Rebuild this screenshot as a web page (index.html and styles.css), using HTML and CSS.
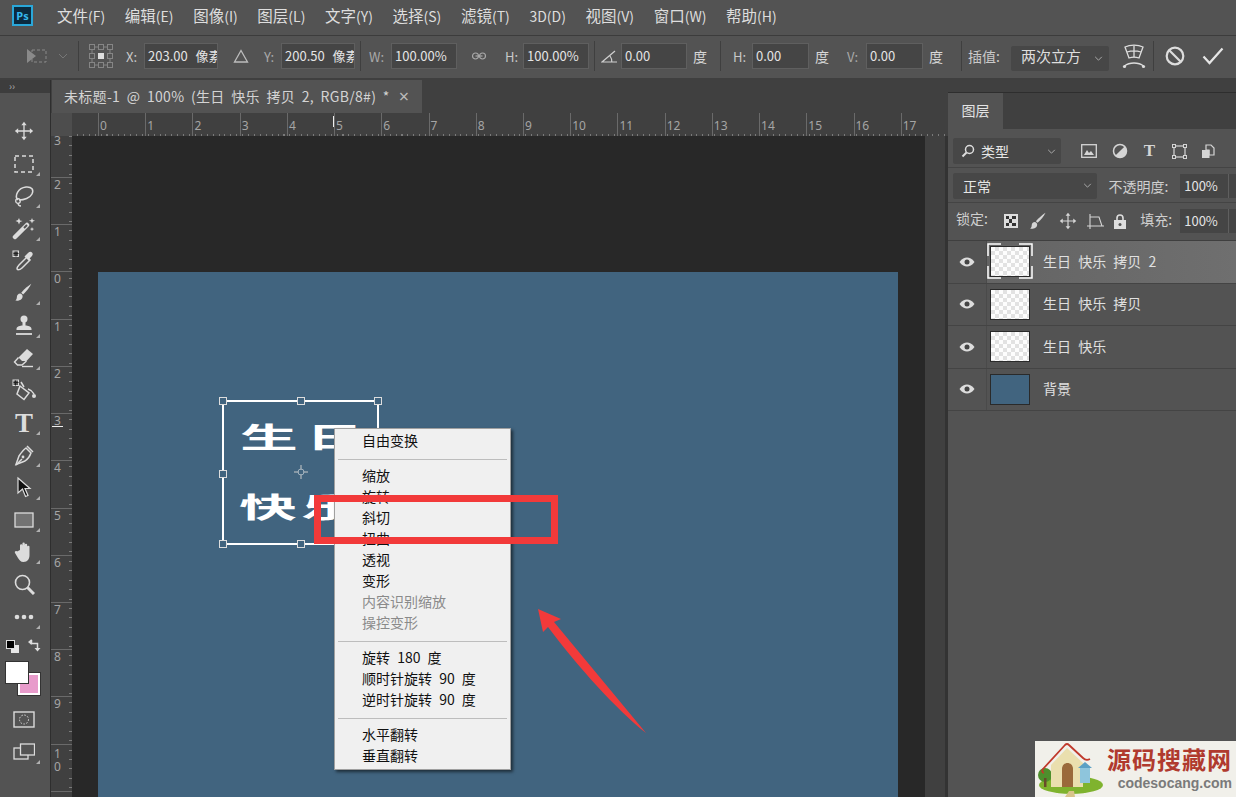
FILE: index.html
```html
<!DOCTYPE html>
<html lang="zh">
<head>
<meta charset="utf-8">
<title>Photoshop</title>
<link rel="stylesheet" href="styles.css">
</head>
<body>
<svg class="defs" width="0" height="0">
  <symbol id="i-move" viewBox="0 0 24 24"><path d="M12 3v18M3 12h18" fill="none" stroke="currentColor" stroke-width="1.6"/><path d="M12 1l3.2 4H8.800zM12 23l3.200-4H8.800zM1 12l4-3.200v6.400zM23 12l-4-3.200v6.400z" fill="currentColor"/></symbol>
  <symbol id="i-brush" viewBox="0 0 24 24"><path d="M20 2c-1.500 3.500-5.500 8.500-9 11.500l-2-1.800C12 8 17 4 20 2z" fill="currentColor"/><path d="M8 12.500c-2.500 0-3.800 2-3.800 4 0 1.500-.7 2.800-1.700 3.700 3.500.6 8-.6 8-4.700 0-1-.8-2.700-2.500-3z" fill="currentColor"/></symbol>
</svg>

<div class="app">
  <header class="menubar">
    <div class="ps-logo">Ps</div>
    <nav class="menus">
      <span>文件<small>(F)</small></span><span>编辑<small>(E)</small></span><span>图像<small>(I)</small></span><span>图层<small>(L)</small></span><span>文字<small>(Y)</small></span><span>选择<small>(S)</small></span><span>滤镜<small>(T)</small></span><span><small>3D(D)</small></span><span>视图<small>(V)</small></span><span>窗口<small>(W)</small></span><span>帮助<small>(H)</small></span>
    </nav>
  </header>

  <div class="optbar">
    <svg class="o-icon" width="22" height="18" viewBox="0 0 22 18"><path d="M1 2l9 7-9 7z" fill="#8a8a8a"/><rect x="6" y="3" width="14" height="12" fill="none" stroke="#8a8a8a" stroke-dasharray="3 2"/></svg>
    <svg class="chev dim" width="10" height="6" viewBox="0 0 10 6"><path d="M1 1l4 4 4-4" fill="none" stroke="currentColor"/></svg>
    <i class="sep"></i>
    <svg class="o-left" width="24" height="24" viewBox="0 0 24 24"><g fill="none" stroke="#858585"><rect x=".5" y=".5" width="5" height="5"/><rect x="9.500" y=".5" width="5" height="5"/><rect x="18.500" y=".5" width="5" height="5"/><rect x=".5" y="9.500" width="5" height="5"/><rect x="18.500" y="9.500" width="5" height="5"/><rect x=".5" y="18.500" width="5" height="5"/><rect x="9.500" y="18.500" width="5" height="5"/><rect x="18.500" y="18.500" width="5" height="5"/><path d="M6 3h3M15 3h3M6 21h3M15 21h3M3 6v3M3 15v3M21 6v3M21 15v3"/></g><rect x="9" y="9" width="6" height="6" fill="#ddd"/></svg>
    <span class="lab">X:</span><span class="inp">203.00 像素</span>
    <svg class="o-tri" width="16" height="14" viewBox="0 0 16 14"><path d="M8 1.500L14.500 13h-13z" fill="none" stroke="#bdbdbd" stroke-width="1.300"/></svg>
    <span class="lab dim">Y:</span><span class="inp">200.50 像素</span>
    <i class="sep"></i>
    <span class="lab dim">W:</span><span class="inp">100.00%</span>
    <svg class="o-link" width="16" height="8" viewBox="0 0 16 8"><g fill="none" stroke="#a8a8a8" stroke-width="1.200"><circle cx="4.500" cy="4" r="3"/><circle cx="11.500" cy="4" r="3"/><path d="M4.500 4h7"/></g></svg>
    <span class="lab">H:</span><span class="inp">100.00%</span>
    <i class="sep"></i>
    <svg class="o-left" width="17" height="13" viewBox="0 0 17 13"><path d="M16 12H1L14 1M9 6c1.200 1.500 1.800 3.500 1.800 6" fill="none" stroke="#cfcfcf" stroke-width="1.200"/></svg>
    <span class="inp">0.00</span><span class="unit">度</span>
    <i class="sep"></i>
    <span class="lab">H:</span><span class="inp">0.00</span><span class="unit">度</span>
    <span class="lab dim">V:</span><span class="inp">0.00</span><span class="unit">度</span>
    <i class="sep"></i>
    <span class="lab wide">插值:</span>
    <span class="sel"><b>两次立方</b><svg class="chev" width="9" height="5" viewBox="0 0 10 6"><path d="M1 1l4 4 4-4" fill="none" stroke="currentColor"/></svg></span>
    <svg class="o-warp" width="24" height="26" viewBox="0 0 24 26"><g fill="none" stroke="#ddd" stroke-width="1.300"><path d="M3 4c5-2.500 13-2.500 18 0l-4 11c-3-1-7-1-10 0z"/><path d="M12 2.500v12M5 9c4-1.200 10-1.200 14 0"/><path d="M2.500 23c5-4 14-4 19 0"/></g><circle cx="2.500" cy="23.500" r="1.600" fill="#ddd"/><circle cx="21.500" cy="23.500" r="1.600" fill="#ddd"/></svg>
    <i class="sep"></i>
    <svg class="o-left" width="20" height="20" viewBox="0 0 20 20"><circle cx="10" cy="10" r="8.300" fill="none" stroke="#ddd" stroke-width="2.200"/><path d="M4.500 4.500l11 11" stroke="#ddd" stroke-width="2.200"/></svg>
    <svg class="o-left" width="22" height="18" viewBox="0 0 22 18"><path d="M1.500 9.500l6 6.500L20.500 1.500" fill="none" stroke="#e6e6e6" stroke-width="2.200"/></svg>
  </div>

  <div class="main">
    <aside class="toolbar">
      <div class="tb-head">››</div>
      <div class="tb-grip"></div>
      <div class="tool"><svg class="ic" width="20" height="20"><use href="#i-move"/></svg></div>
      <div class="tool more"><svg class="ic" width="20" height="18" viewBox="0 0 20 18"><rect x="1" y="1" width="18" height="16" fill="none" stroke="currentColor" stroke-width="1.500" stroke-dasharray="4 3"/></svg></div>
      <div class="tool more"><svg class="ic" width="22" height="22" viewBox="0 0 22 22"><path d="M5 15C1 11 5 3 13 2c6-.5 8 3 6 7-2 4-8 6-13 6" fill="none" stroke="currentColor" stroke-width="1.500"/><circle cx="5" cy="16" r="2.300" fill="none" stroke="currentColor" stroke-width="1.300"/><path d="M5 18c0 2 1 3 3 3" fill="none" stroke="currentColor" stroke-width="1.300"/></svg></div>
      <div class="tool more"><svg class="ic" width="24" height="24" viewBox="0 0 24 24"><path d="M3 21L15 9" stroke="currentColor" stroke-width="4.500" stroke-linecap="round"/><path d="M12 12l3-3" stroke="#535353" stroke-width="2"/><path d="M7 2l1 2.500L10.500 5 8 6l-1 2.500L6 6 3.500 5 6 4zM20 2l.8 2 2.200.8-2.200.8-.8 2-.8-2-2.200-.8 2.200-.8zM20 11l.6 1.500 1.500.6-1.500.6-.6 1.500-.6-1.500-1.500-.6 1.500-.6z" fill="currentColor"/></svg></div>
      <div class="tool"><svg class="ic" width="24" height="24" viewBox="0 0 24 24"><path d="M7 16l8-8 3 3-8 8c-1.500 1.500-3 1.800-4 1.800l-1-.8c0-1 .5-2.500 2-4z" fill="none" stroke="currentColor" stroke-width="1.500"/><path d="M14 6l2-2c1.500-1.500 3-1.500 4-.5s1 2.500-.5 4l-2 2 1 1-1.500 1.500-4.500-4.500 1.500-1.500z" fill="currentColor"/><rect x="1" y="2" width="5.500" height="5.500" fill="#555" stroke="#ddd"/><path d="M1.500 4.500l5 0M4 2.500v5" stroke="#222"/></svg></div>
      <div class="tool more"><svg class="ic" width="22" height="22"><use href="#i-brush"/></svg></div>
      <div class="tool more"><svg class="ic" width="20" height="21" viewBox="0 0 20 21"><circle cx="10" cy="4" r="3.500" fill="currentColor"/><path d="M8.500 7h3v3.500c2 .3 6 .8 6 3.500v1H2.500v-1c0-2.700 4-3.200 6-3.500z" fill="currentColor"/><path d="M2 19h16" stroke="currentColor" stroke-width="1.800"/></svg></div>
      <div class="tool more"><svg class="ic" width="22" height="20" viewBox="0 0 22 20"><path d="M14 1l6 5-6.500 7H9L5.500 9.500z" fill="currentColor"/><path d="M5.500 9.500L1.500 14l3 3h4.500l4.500-4" fill="none" stroke="currentColor" stroke-width="1.400"/><path d="M9 18.500h11" stroke="currentColor" stroke-width="1.400"/></svg></div>
      <div class="tool"><svg class="ic" width="24" height="23" viewBox="0 0 24 23"><path d="M8 7l9 7-5 6.500-7-5.500z" fill="none" stroke="currentColor" stroke-width="1.500"/><path d="M9 3l3 5" stroke="currentColor" stroke-width="1.500"/><circle cx="22" cy="17" r="2" fill="currentColor"/><path d="M16 10c3 1 5 3 6 5" fill="none" stroke="currentColor" stroke-width="1.500"/><rect x="1" y="1" width="5.500" height="5.500" fill="#555" stroke="#ddd"/><path d="M1.500 3.500l5 0M3.500 1.500v5" stroke="#222"/></svg></div>
      <div class="tool more"><span class="t-glyph">T</span></div>
      <div class="tool more"><svg class="ic" width="20" height="21" viewBox="0 0 20 21"><path d="M12 3l5 5c-1 3-3 6-6 8-3 1-6 2.500-9 3.500C3 16.500 4 14 5 11c2-3 4-6 7-8z" fill="none" stroke="currentColor" stroke-width="1.500"/><path d="M13 1l6 6M2 20l6-6" stroke="currentColor" stroke-width="1.500"/><circle cx="9" cy="12" r="1.400" fill="currentColor"/></svg></div>
      <div class="tool more"><svg class="ic" width="16" height="22" viewBox="0 0 16 22"><path d="M2 2l12 10.500H9l3 7-2.500 1-3-7.500L2 17z" fill="#111" stroke="#ddd" stroke-width="1.200"/></svg></div>
      <div class="tool more"><svg class="ic" width="20" height="16" viewBox="0 0 20 16"><rect x="1" y="1" width="18" height="14" fill="#737373" stroke="currentColor" stroke-width="1.300"/></svg></div>
      <div class="tool more"><svg class="ic" width="20" height="21" viewBox="0 0 20 21"><path d="M6 8V3.500a1.200 1.200 0 012.400 0V1.800a1.200 1.200 0 012.400 0V3a1.200 1.200 0 012.400 0v1.500a1.200 1.200 0 012.300 0V13c0 4-2 7-6 7-3 0-4-2-5.500-4L1 11c-.8-1.500 1-2.500 2-1.500z" fill="currentColor"/></svg></div>
      <div class="tool"><svg class="ic" width="21" height="21" viewBox="0 0 21 21"><circle cx="8.500" cy="8.500" r="7" fill="none" stroke="currentColor" stroke-width="1.600"/><path d="M13.500 13.500L20 20" stroke="currentColor" stroke-width="3"/></svg></div>
      <div class="tool more"><svg class="ic" width="20" height="6" viewBox="0 0 20 6"><circle cx="3" cy="3" r="2.300" fill="currentColor"/><circle cx="10" cy="3" r="2.300" fill="currentColor"/><circle cx="17" cy="3" r="2.300" fill="currentColor"/></svg></div>
      <div class="swatches">
        <i class="mini-b"></i><i class="mini-f"></i>
        <svg class="swap" width="13" height="13" viewBox="0 0 13 13"><path d="M3.500 1v3.500h6V11" fill="none" stroke="#ddd" stroke-width="1.500"/><path d="M0 3l3.500-3v6zM6.500 9h6l-3 3.500z" fill="#ddd"/></svg>
        <i class="bg"></i><i class="fg"></i>
      </div>
      <div class="tool"><svg class="ic" width="22" height="17" viewBox="0 0 22 17"><rect x="1" y="1" width="20" height="15" fill="none" stroke="currentColor" stroke-width="1.400"/><circle cx="11" cy="8.500" r="4.500" fill="none" stroke="currentColor" stroke-dasharray="1.500 1.500"/></svg></div>
      <div class="tool more"><svg class="ic" width="22" height="17" viewBox="0 0 22 17"><rect x="1" y="5" width="14" height="11" fill="none" stroke="currentColor" stroke-width="1.300"/><rect x="7.500" y="1" width="14" height="11" fill="#535353" stroke="currentColor" stroke-width="1.300"/></svg></div>
    </aside>

    <section class="doc">
      <div class="tabbar">
        <div class="tab"><span>未标题-1 @ 100% (生日 快乐 拷贝 2, RGB/8#) *</span><em>×</em></div>
      </div>
      <div class="hruler">
        <div class="corner"></div>
        <div class="hoff"></div>
        <span>0</span><span>1</span><span>2</span><span>3</span><span>4</span><span>5</span><span>6</span><span>7</span><span>8</span><span>9</span><span>10</span><span>11</span><span>12</span><span>13</span><span>14</span><span>15</span><span>16</span><span>17</span>
        <i class="hmark"></i>
      </div>
      <div class="docbody">
        <div class="vruler">
          <span class="first">3</span><span>2</span><span>1</span><span>0</span><span>1</span><span>2</span><span>3</span><span>4</span><span>5</span><span>6</span><span>7</span><span>8</span><span>9</span><span class="ten">10</span><span class="end"></span>
          <i class="vmark"></i>
        </div>
        <div class="canvas">
          <div class="page"></div>
        </div>
        <div class="gutter"></div>
      </div>

      <div class="tbox">
        <b class="art a1">生</b><b class="art a2">日</b><b class="art a3">快</b><b class="art a4">乐</b>
        <i class="h tl"></i><i class="h tm"></i><i class="h tr"></i><i class="h ml"></i><i class="h bl"></i><i class="h bm"></i>
        <svg class="pivot" width="14" height="14" viewBox="0 0 14 14"><path d="M7 0v5M7 9v5M0 7h5M9 7h5" stroke="#c9c9c9"/><circle cx="7" cy="7" r="3" fill="none" stroke="#9fb0bd"/></svg>
      </div>

      <div class="ctx">
        <div class="it">自由变换</div><hr>
        <div class="it">缩放</div><div class="it">旋转</div><div class="it">斜切</div><div class="it">扭曲</div><div class="it">透视</div><div class="it">变形</div>
        <div class="it off">内容识别缩放</div><div class="it off">操控变形</div><hr>
        <div class="it">旋转 180 度</div><div class="it">顺时针旋转 90 度</div><div class="it">逆时针旋转 90 度</div><hr>
        <div class="it">水平翻转</div><div class="it">垂直翻转</div>
      </div>

      <div class="redbox"></div>
      <svg class="arrow" width="120" height="136" viewBox="0 0 120 136"><path d="M1 1l23 10-7 3 92 111C80 102 40 58 11 19L6 24z" fill="#f23a3a"/></svg>
    </section>

    <aside class="panel">
      <div class="p-top"></div>
      <div class="p-tabs"><div class="p-tab">图层</div></div>
      <div class="p-row filter">
        <span class="psel w108"><svg width="14" height="14" viewBox="0 0 14 14"><circle cx="8.500" cy="5.500" r="4" fill="none" stroke="#ddd" stroke-width="1.500"/><path d="M5.500 8.500L1.500 12.500" stroke="#ddd" stroke-width="2"/></svg><b>类型</b><svg class="chev" width="9" height="5" viewBox="0 0 10 6"><path d="M1 1l4 4 4-4" fill="none" stroke="currentColor"/></svg></span>
        <div class="ficons">
          <svg width="16" height="14" viewBox="0 0 16 14"><rect x=".7" y=".7" width="14.600" height="12.600" fill="none" stroke="#d5d5d5" stroke-width="1.300"/><path d="M3 11l3-5 2 3 2-2 3 4z" fill="#d5d5d5"/></svg>
          <svg width="16" height="16" viewBox="0 0 16 16"><circle cx="8" cy="8" r="6.500" fill="none" stroke="#d5d5d5" stroke-width="1.500"/><path d="M12.600 3.400A6.500 6.500 0 013.400 12.600z" fill="#d5d5d5"/></svg>
          <span class="ft">T</span>
          <svg width="15" height="15" viewBox="0 0 15 15"><rect x="2" y="2" width="11" height="11" fill="none" stroke="#d5d5d5" stroke-width="1.200"/><g fill="#535353" stroke="#d5d5d5"><rect x=".5" y=".5" width="3" height="3"/><rect x="11.500" y=".5" width="3" height="3"/><rect x=".5" y="11.500" width="3" height="3"/><rect x="11.500" y="11.500" width="3" height="3"/></g></svg>
          <svg width="14" height="15" viewBox="0 0 14 15"><path d="M5 1h5l3 3v7H8V6H5z" fill="none" stroke="#d5d5d5" stroke-width="1.200"/><rect x="1" y="6" width="7.500" height="8" fill="#d5d5d5"/></svg>
        </div>
      </div>
      <div class="p-row blend">
        <span class="psel w145"><b>正常</b><svg class="chev" width="9" height="5" viewBox="0 0 10 6"><path d="M1 1l4 4 4-4" fill="none" stroke="currentColor"/></svg></span>
        <span class="plab op">不透明度:</span>
        <span class="pinp">100%</span><i class="pstub"></i>
      </div>
      <div class="p-row lock">
        <span class="plab lk">锁定:</span>
        <div class="licons">
          <svg width="14" height="14" viewBox="0 0 14 14"><rect width="14" height="14" fill="#ddd"/><path d="M2 2h3v3H2zM8 2h4v3H8zM5 5h3v4H5zM2 9h3v3H2zM8 9h4v3H8z" fill="#333"/></svg>
          <svg width="21" height="21"><use href="#i-brush"/></svg>
          <svg width="18" height="18"><use href="#i-move"/></svg>
          <svg width="17" height="15" viewBox="0 0 17 15"><path d="M3 3h9l3 9H3zM3 0v15M0 12h17" fill="none" stroke="#d5d5d5" stroke-width="1.100"/></svg>
          <svg width="12" height="15" viewBox="0 0 12 15"><path d="M3 6V4a3 3 0 016 0v2" fill="none" stroke="#ddd" stroke-width="1.600"/><rect y="6" width="12" height="9" fill="#ddd"/><circle cx="6" cy="10.500" r="1.500" fill="#535353"/></svg>
        </div>
        <span class="plab fil">填充:</span>
        <span class="pinp">100%</span><i class="pstub"></i>
      </div>
      <div class="layers">
        <div class="layer">
          <svg class="eye" width="16" height="10" viewBox="0 0 16 10"><path d="M.5 5C3 1.500 5.500.5 8 .5s5 1 7.500 4.500C13 8.500 10.500 9.500 8 9.500S3 8.500.5 5z" fill="#ddd"/><circle cx="8" cy="5" r="2.500" fill="#444"/></svg>
          <div class="lname active"><div class="thumb chk sel-th"><svg class="brk" width="46" height="36" viewBox="0 0 46 36"><path d="M1 13V1h13M32 1h13v12M45 23v12H32M14 35H1V23" fill="none" stroke="#fff" stroke-width="1.500"/></svg></div><span>生日 快乐 拷贝 2</span></div>
        </div>
        <div class="layer">
          <svg class="eye" width="16" height="10" viewBox="0 0 16 10"><path d="M.5 5C3 1.500 5.500.5 8 .5s5 1 7.500 4.500C13 8.500 10.500 9.500 8 9.500S3 8.500.5 5z" fill="#ddd"/><circle cx="8" cy="5" r="2.500" fill="#444"/></svg>
          <div class="lname"><div class="thumb chk"></div><span>生日 快乐 拷贝</span></div>
        </div>
        <div class="layer">
          <svg class="eye" width="16" height="10" viewBox="0 0 16 10"><path d="M.5 5C3 1.500 5.500.5 8 .5s5 1 7.500 4.500C13 8.500 10.500 9.500 8 9.500S3 8.500.5 5z" fill="#ddd"/><circle cx="8" cy="5" r="2.500" fill="#444"/></svg>
          <div class="lname"><div class="thumb chk"></div><span>生日 快乐</span></div>
        </div>
        <div class="layer">
          <svg class="eye" width="16" height="10" viewBox="0 0 16 10"><path d="M.5 5C3 1.500 5.500.5 8 .5s5 1 7.500 4.500C13 8.500 10.500 9.500 8 9.500S3 8.500.5 5z" fill="#ddd"/><circle cx="8" cy="5" r="2.500" fill="#444"/></svg>
          <div class="lname"><div class="thumb blue"></div><span>背景</span></div>
        </div>
      </div>
    </aside>
  </div>

  <div class="wm">
    <svg class="wm-house" width="72" height="56" viewBox="0 0 72 56">
      <ellipse cx="36" cy="44" rx="32" ry="9" fill="#7fb32e"/>
      <path d="M34 50l-4 6h10l-1-6z" fill="#d8c48a"/>
      <circle cx="10" cy="34" r="7" fill="#4e8f2c"/><rect x="9" y="37" width="2.500" height="9" fill="#6a4a2a"/>
      <circle cx="19" cy="38" r="3.500" fill="#4e8f2c"/>
      <path d="M16 24L32 7l16 15v24H16z" fill="#eadfae"/>
      <path d="M9 32q-3-1-1-4L30 4q2-2 4 0l14 13q3 3 7 1" fill="none" stroke="#c0392b" stroke-width="1.800"/>
      <path d="M27 46V28c0-8 11-8 11 0v18z" fill="#9a6a3a"/>
      <rect x="45" y="26" width="10" height="16" fill="#8ec5dc"/>
      <path d="M43 27l7-6 7 6z" fill="#5aa0c4"/>
    </svg>
    <div class="wm-text">
      <strong>源码搜藏网</strong>
      <span>codesocang.com</span>
    </div>
  </div>
</div>
</body>
</html>
```

FILE: styles.css
```css
* { box-sizing: border-box; }
html, body { margin: 0; height: 100%; overflow: hidden; background: #535353; }
body { font-family: "Noto Sans CJK SC", "Noto Sans", sans-serif; font-size: 14px; color: #dcdcdc; }
.defs { position: absolute; }
i, em { font-style: normal; display: block; }
b { font-weight: 400; }

.app { position: relative; width: 1236px; height: 797px; display: flex; flex-direction: column; overflow: hidden; }

/* menu */
.menubar { height: 36px; flex: none; display: flex; align-items: center; padding: 0 0 4px 12px; background: #535353; border-bottom: 1px solid #3c3c3c; }
.ps-logo { width: 21px; height: 21px; margin-right: 24px; background: #0b2a3f; border: 2px solid #2aa7d9; color: #35b8ee; font: 700 11px/17px "Noto Sans", sans-serif; text-align: center; }
.menus { display: flex; gap: 19.600px; font-size: 15.500px; color: #dedede; line-height: 20px; }
.menus small { font-size: 14px; }

/* options */
.optbar { height: 44px; flex: none; display: grid; align-items: center; padding: 0 0 2px 26px; background: #535353; border-bottom: 2px solid #3f3f3f;
  grid-template-columns: 22px 25px 16px 37px 18px 74px 46px 17px 74px 14px 22px 66px 48px 18px 66px 12px 20px 66px 28px 18px 19px 57px 38px 19px 57px 33px 12px 43px 98px 39px 17px 37px 34px; }
.optbar svg { display: block; }
.o-warp { margin-left: 13px; }
.o-tri { justify-self: center; }
.o-link { justify-self: center; margin-right: 4px; }
.chev { color: #bdbdbd; }
.dim { color: #777; }
.optbar .chev.dim { justify-self: center; margin-left: 4px; }
.sep { width: 1px; height: 30px; background: #3f3f3f; margin-left: 5px; }
.lab { font-size: 13px; color: #c9c9c9; white-space: nowrap; }
.lab.dim { color: #a9a9a9; }
.lab.wide { font-size: 14px; }
.inp { height: 26px; line-height: 24px; padding-left: 3px; background: #454545; border: 1px solid #5f5f5f; font-size: 13px; word-spacing: 5px; color: #e4e4e4; overflow: hidden; white-space: nowrap; }
.unit { font-size: 14px; padding-left: 6px; color: #d8d8d8; }
.sel { height: 25px; margin-top: 4px; display: flex; align-items: center; justify-content: space-between; padding: 0 6px 0 10px; background: #474747; border-radius: 2px; font-size: 15px; line-height: 19px; color: #dedede; }
.sel b { margin-bottom: 5px; }

/* main */
.main { flex: 1; min-height: 0; display: flex; }

.toolbar { width: 51px; flex: none; display: flex; flex-direction: column; background: #535353; border-right: 1px solid #2e2e2e; color: #dcdcdc; }
.tb-head { height: 13px; background: #3d3d3d; color: #aaa; font-size: 10px; line-height: 12px; padding-left: 9px; }
.tb-grip { height: 22px; flex: none; }
.tool { position: relative; height: 32.4px; flex: none; display: flex; align-items: center; justify-content: center; padding-right: 2px; }
.tool.more::after { content: ""; position: absolute; right: 10px; bottom: 4px; border-left: 4px solid transparent; border-bottom: 4px solid #b0b0b0; }
.ic { display: block; }
.t-glyph { font: 700 27px/30px "Liberation Serif", serif; color: #dcdcdc; }

.swatches { position: relative; height: 70px; flex: none; }
.swatches i { position: absolute; }
.mini-b { left: 11px; top: 12px; width: 8px; height: 8px; background: #e6e6e6; }
.mini-f { left: 6px; top: 7px; width: 9px; height: 9px; background: #000; border: 1px solid #ddd; }
.swap { position: absolute; left: 28px; top: 6px; }
.bg { left: 18px; top: 40px; width: 22px; height: 22px; background: #e89bcb; border: 2px solid #fff; outline: 1px solid #333; }
.fg { left: 5px; top: 28px; width: 24px; height: 23px; background: #fff; border: 1px solid #333; }

/* document */
.doc { position: relative; flex: 1; min-width: 0; display: flex; flex-direction: column; }
.tabbar { height: 33px; flex: none; background: #404040; padding-left: 1px; }
.tab { width: 370px; height: 33px; background: #535353; display: flex; align-items: center; padding: 0 0 2px 12px; color: #d4d4d4; font-size: 14px; white-space: nowrap; letter-spacing: .3px; word-spacing: 3.200px; }
.tab em { margin-left: 9px; color: #bbb; font-size: 18px; font-family: "Noto Sans", sans-serif; }
.hruler { position: relative; height: 23px; flex: none; display: flex; background: #404040 repeating-linear-gradient(90deg, #7a7a7a 0 1px, transparent 1px 5.9px) 26px bottom / 100% 2px no-repeat; color: #a5a5a5; font-size: 12px; overflow: hidden; }
.hruler .corner { width: 21px; flex: none; background: #4d4d4d; }
.hoff { width: 26px; flex: none; }
.hruler span { width: 47.22px; flex: none; padding: 4px 0 0 1px; line-height: 18px; border-left: 1px solid #6a6a6a; font-family: "Noto Sans", sans-serif; }
.hmark { position: absolute; left: 282px; top: 3px; width: 1px; height: 11px; background: #eee; }
.docbody { flex: 1; min-height: 0; display: flex; }
.vruler { position: relative; width: 21px; flex: none; display: flex; flex-direction: column; background: #404040 repeating-linear-gradient(180deg, #7a7a7a 0 1px, transparent 1px 9.44px) right top / 3px 100% no-repeat; color: #a5a5a5; font: 12px/10px "Noto Sans", sans-serif; }
.vruler span { height: 47.22px; flex: none; padding: 2px 0 0 3px; border-top: 1px solid #6a6a6a; }
.vruler .first { height: 41px; border-top: 0; padding-top: 0; }
.vruler .ten { padding-right: 10px; line-height: 13px; word-break: break-all; }
.vruler .end { height: 6px; }
.vmark { position: absolute; left: 1px; top: 290px; width: 11px; height: 1px; background: #eee; }
.canvas { width: 853px; flex: none; background: #282828; padding: 136px 27px 0 26px; }
.page { height: 100%; background: #41647f; }
.gutter { flex: 1; background: #404040; border-right: 3px solid #333; }

/* transform box */
.tbox { position: absolute; left: 171px; top: 320px; width: 157px; height: 145px; border: 2px solid #fff; }
.h { position: absolute; width: 8px; height: 8px; background: #41647f; border: 1px solid #ddd; }
.tl { left: -5px; top: -5px; } .tm { left: 73px; top: -5px; } .tr { right: -5px; top: -5px; }
.ml { left: -5px; top: 68px; } .bl { left: -5px; bottom: -5px; } .bm { left: 73px; bottom: -5px; }
.pivot { position: absolute; left: 70px; top: 63px; }
.art { position: absolute; font-weight: 700; font-size: 34px; line-height: 34px; color: #fff; transform-origin: 0 0; transform: scale(1.700, .85); }
.a1 { left: 16px; top: 20px; } .a2 { left: 82px; top: 20px; }
.a3 { left: 15px; top: 90px; } .a4 { left: 77px; top: 90px; }

/* context menu */
.ctx { position: absolute; left: 283px; top: 348px; width: 177px; height: 342px; padding: 1px 1px; background: #f0f0f0; border: 1px solid #a0a0a0; box-shadow: 2px 2px 3px rgba(0,0,0,.55); color: #111; font-size: 14px; word-spacing: 4px; }
.it { height: 21px; line-height: 21px; padding-left: 26px; white-space: nowrap; }
.it.off { color: #8a8a8a; }
.ctx hr { height: 1px; margin: 8px 2px 5px; border: 0; background: #bdbdbd; }
.redbox { position: absolute; left: 263px; top: 415px; width: 244px; height: 49px; border: 7px solid #f23a3a; }
.arrow { position: absolute; left: 486px; top: 528px; }

/* panel */
.panel { width: 288px; flex: none; display: flex; flex-direction: column; background: #535353; }
.p-top { height: 13px; background: #404040; border-bottom: 1px solid #2e2e2e; flex: none; }
.p-tabs { height: 36px; flex: none; background: #404040; }
.p-tab { width: 55px; height: 36px; background: #535353; text-align: center; line-height: 34px; font-size: 14px; color: #e4e4e4; }
.p-row { display: flex; align-items: center; padding-left: 5px; flex: none; }
.filter { height: 39px; padding-top: 6px; border-bottom: 1px solid #444; }
.blend { height: 35px; padding-top: 1px; border-bottom: 1px solid #444; }
.lock { height: 37px; padding-bottom: 1px; }
.psel { height: 26px; display: flex; align-items: center; gap: 6px; padding: 0 5px 0 8px; background: #474747; border-radius: 2px; font-size: 14px; color: #e6e6e6; }
.psel .chev { margin-left: auto; }
.w108 { width: 108px; }
.w145 { width: 145px; padding-left: 10px; }
.ficons { display: flex; align-items: center; gap: 14.500px; margin-left: 20px; }
.ficons svg { display: block; }
.ft { font: 700 17px/16px "Liberation Serif", serif; width: 15px; text-align: center; color: #d5d5d5; }
.plab { font-size: 14px; color: #cfcfcf; white-space: nowrap; }
.op { margin: 0 7px 0 11px; width: 65px; }
.lk { width: 36px; margin-left: 3px; margin-bottom: 7px; }
.pinp { width: 48px; height: 24px; line-height: 24px; padding-left: 4px; background: #454545; font-size: 13px; color: #e4e4e4; }
.pstub { width: 8px; height: 24px; background: #454545; border-left: 1px solid #5f5f5f; }
.licons { display: flex; align-items: center; justify-content: space-between; width: 123px; margin-left: 12px; }
.licons svg { display: block; color: #d5d5d5; }
.fil { margin: 0 7px 4px 14px; width: 33px; }

.layers { border-top: 1px solid #3f3f3f; }
.layer { height: 42.500px; display: flex; align-items: stretch; border-bottom: 1px solid #444; }
.eye { width: 16px; flex: none; margin: auto 11px auto 11px; }
.lname { flex: 1; display: flex; align-items: center; gap: 13px; padding-left: 3px; border-left: 1px solid #4a4a4a; color: #e0e0e0; font-size: 14px; word-spacing: 4px; }
.lname span { margin-bottom: 2px; }
.lname.active { background: linear-gradient(90deg, #646464, #6f6f6f); }
.thumb { position: relative; width: 40px; height: 31px; border: 1px solid #2a2a2a; flex: none; }
.chk { background: #f4f4f4 repeating-conic-gradient(#e2e2e2 0 25%, #fdfdfd 0 50%) 0 0 / 8px 8px; }
.blue { background: #41647f; }
.brk { position: absolute; left: -4px; top: -4px; display: block; }

/* watermark */
.wm { position: absolute; right: 0; bottom: 0; width: 201px; height: 56px; display: flex; background: #f1f0ea; }
.wm-house { flex: none; display: block; }
.wm-text { display: flex; flex-direction: column; align-items: flex-end; gap: 4px; padding: 6px 4px 0 0; flex: 1; }
.wm-text strong { font-size: 24px; line-height: 24px; font-weight: 700; color: #b03a2e; letter-spacing: 1px; white-space: nowrap; }
.wm-text span { font: 700 14px/16px "Liberation Sans", sans-serif; color: #7a7a7a; white-space: nowrap; }
```
